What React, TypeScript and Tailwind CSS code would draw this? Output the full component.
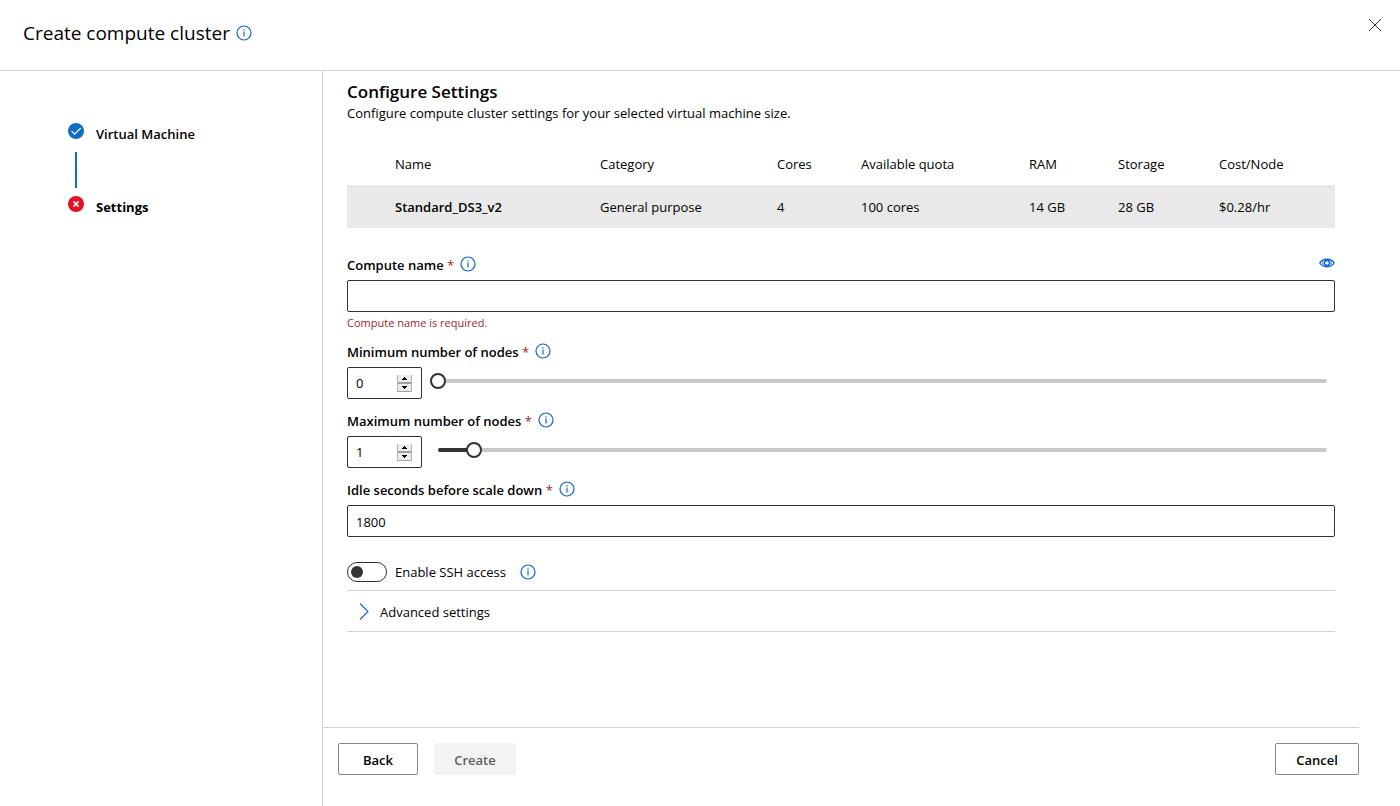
import { useState, type ReactNode } from "react";

const columns = [
  { label: "Name", value: "Standard_DS3_v2", width: "w-[205px]" },
  { label: "Category", value: "General purpose", width: "w-[177px]" },
  { label: "Cores", value: "4", width: "w-[84px]" },
  { label: "Available quota", value: "100 cores", width: "w-[168px]" },
  { label: "RAM", value: "14 GB", width: "w-[89px]" },
  { label: "Storage", value: "28 GB", width: "w-[101px]" },
  { label: "Cost/Node", value: "$0.28/hr", width: "" },
];

const MAX_NODES = 25;

function InfoIcon() {
  return (
    <svg viewBox="0 0 16 16" className="size-4 shrink-0" fill="none" aria-hidden="true">
      <circle cx="8" cy="8" r="7" stroke="#0f62d9" strokeWidth="1.2" />
      <path d="M8 6.5V11.5" stroke="#0f62d9" strokeWidth="1.2" />
      <path d="M7.4 4.2h1.2v1.3H7.4z" fill="#0f62d9" />
    </svg>
  );
}

function InfoButton({ label }: { label: string }) {
  return (
    <button type="button" aria-label={label} className="flex size-4 items-center justify-center">
      <InfoIcon />
    </button>
  );
}

function FieldLabel({ htmlFor, children }: { htmlFor: string; children: string }) {
  return (
    <div className="flex h-5 items-center gap-1.5">
      <label htmlFor={htmlFor} className="pt-0.5 font-semibold">
        {children} <span className="font-normal text-[#a4262c]">*</span>
      </label>
      <InfoButton label={`About ${children}`} />
    </div>
  );
}

function Step({ icon, children }: { icon: ReactNode; children: ReactNode }) {
  return (
    <li className="flex items-start gap-3">
      {icon}
      {children}
    </li>
  );
}

function NodeField({
  id,
  label,
  value,
  onChange,
}: {
  id: string;
  label: string;
  value: number;
  onChange: (value: number) => void;
}) {
  const set = (next: number) => onChange(Math.min(MAX_NODES, Math.max(0, next)));
  return (
    <div>
      <FieldLabel htmlFor={id}>{label}</FieldLabel>
      <div className="mt-1.5 flex gap-2">
        <div className="flex h-8 w-[75px] shrink-0 items-center rounded-xs border border-[#323130] pr-[9px]">
          <input
            id={id}
            type="number"
            min={0}
            max={MAX_NODES}
            value={value}
            onChange={(e) => set(Number(e.target.value))}
            className="w-full min-w-0 appearance-none bg-transparent pl-2 outline-none [&::-webkit-inner-spin-button]:appearance-none"
          />
          <div className="flex h-[17px] w-[15px] shrink-0 flex-col border-x border-[#b4b4b4] bg-[#ececec]">
            <button
              type="button"
              aria-label={`Increase ${label}`}
              onClick={() => set(value + 1)}
              className="flex h-2 items-center justify-center border-b border-[#a0a0a0]"
            >
              <svg viewBox="0 0 5 3" className="h-[3px] w-[5px]" shapeRendering="crispEdges">
                <path d="M2 0h1v1h1v1h1v1H0V2h1V1h1z" />
              </svg>
            </button>
            <button
              type="button"
              aria-label={`Decrease ${label}`}
              onClick={() => set(value - 1)}
              className="flex h-[9px] items-center justify-center border-y border-[#a0a0a0]"
            >
              <svg viewBox="0 0 5 3" className="h-[3px] w-[5px]" shapeRendering="crispEdges">
                <path d="M0 0h5v1H4v1H3v1H2V2H1V1H0z" />
              </svg>
            </button>
          </div>
        </div>
        <div className="grid h-7 flex-1 items-center">
          <div className="mx-2 h-1 rounded-full bg-[#c8c8c8] [grid-area:1/1]">
            <div
              className="h-1 rounded-full bg-[#333333]"
              style={{ width: `${(value / MAX_NODES) * 100}%` }}
            />
          </div>
          <input
            type="range"
            aria-label={label}
            min={0}
            max={MAX_NODES}
            value={value}
            onChange={(e) => set(Number(e.target.value))}
            className="h-4 w-full appearance-none bg-transparent [grid-area:1/1] [&::-webkit-slider-thumb]:size-4 [&::-webkit-slider-thumb]:appearance-none [&::-webkit-slider-thumb]:rounded-full [&::-webkit-slider-thumb]:border-2 [&::-webkit-slider-thumb]:border-solid [&::-webkit-slider-thumb]:border-[#333333] [&::-webkit-slider-thumb]:bg-white"
          />
        </div>
      </div>
    </div>
  );
}

export default function App() {
  const [name, setName] = useState("");
  const [minNodes, setMinNodes] = useState(0);
  const [maxNodes, setMaxNodes] = useState(1);
  const [idle, setIdle] = useState("1800");
  const [ssh, setSsh] = useState(false);

  return (
    <div className="flex min-h-screen flex-col bg-white font-['Open_Sans','Noto_Sans',sans-serif] text-[13px] leading-5 text-black">
      <header className="flex items-start justify-between border-b border-[#d2d2d2] pr-[17px] pl-[23px]">
        <div className="flex h-[70px] items-center gap-1.5 pb-1">
          <h1 className="text-[19px] leading-7">Create compute cluster</h1>
          <InfoButton label="About compute clusters" />
        </div>
        <button type="button" aria-label="Close" className="mt-[17px] flex size-4 items-center justify-center">
          <svg viewBox="0 0 16 16" className="size-4" fill="none" stroke="#333" strokeWidth="1">
            <path d="M2 2l12 12M14 2L2 14" />
          </svg>
        </button>
      </header>

      <div className="flex flex-1">
        <nav aria-label="Steps" className="w-[323px] shrink-0 border-r border-[#d2d2d2] pt-[52px] pl-[68px]">
          <ol>
            <Step
              icon={
                <svg viewBox="0 0 16 16" className="size-4" fill="none">
                  <circle cx="8" cy="8" r="8" fill="#106ebe" />
                  <path d="M3.6 8.2l3 3 6.2-6.2" stroke="#fff" strokeWidth="1.1" />
                </svg>
              }
            >
              <a href="#machine" className="pt-px font-semibold">Virtual Machine</a>
            </Step>
            <li aria-hidden="true" className="my-2 ml-[7px] h-9 w-0.5 bg-[#106ebe]" />
            <Step
              icon={
                <svg viewBox="0 0 16 16" className="size-4" fill="none">
                  <circle cx="8" cy="8" r="8" fill="#e81123" />
                  <path d="M5.4 5.4l5.2 5.2M10.6 5.4l-5.2 5.2" stroke="#fff" strokeWidth="1.5" />
                </svg>
              }
            >
              <a href="#settings" aria-current="step" className="pt-px font-bold">Settings</a>
            </Step>
          </ol>
        </nav>

        <main className="flex min-w-0 flex-1 flex-col">
          <div className="flex-1 pr-[65px] pl-6">
            <h2 className="pt-2.5 text-[17px] leading-[22px] font-semibold">Configure Settings</h2>
            <p>Configure compute cluster settings for your selected virtual machine size.</p>

            <table className="mt-5 w-full table-fixed text-left">
              <thead>
                <tr className="h-[42px]">
                  <td className="w-12" />
                  {columns.map((c) => (
                    <th key={c.label} scope="col" className={`font-normal ${c.width}`}>
                      {c.label}
                    </th>
                  ))}
                </tr>
              </thead>
              <tbody>
                <tr className="h-[43px] bg-[#e9e9e9]">
                  <td />
                  {columns.map((c, i) => (
                    <td key={c.label} className={i === 0 ? "font-semibold" : ""}>
                      {c.value}
                    </td>
                  ))}
                </tr>
              </tbody>
            </table>

            <form className="mt-[26px]">
              <div className="flex items-start justify-between">
                <FieldLabel htmlFor="name">Compute name</FieldLabel>
                <button type="button" aria-label="Preview name" className="flex h-[18px] items-center">
                  <svg viewBox="0 0 16 10" className="h-2.5 w-4" fill="none" stroke="#0f62d9">
                    <path d="M.8 5C4 0 12 0 15.2 5C12 10 4 10 .8 5z" strokeWidth="1.3" />
                    <circle cx="8" cy="5" r="2.6" strokeWidth="1.6" />
                    <path d="M4 3.2Q3 5 4 6.8M12 3.2Q13 5 12 6.8" strokeWidth=".7" />
                  </svg>
                </button>
              </div>
              <input
                id="name"
                value={name}
                onChange={(e) => setName(e.target.value)}
                className="mt-1.5 block h-8 w-full rounded-xs border border-[#323130] px-2 outline-none"
              />
              <p className="mt-px mb-2 text-[11px] leading-5 text-[#a4262c]">Compute name is required.</p>

              <NodeField id="min-nodes" label="Minimum number of nodes" value={minNodes} onChange={setMinNodes} />
              <div className="mt-[11px]">
                <NodeField id="max-nodes" label="Maximum number of nodes" value={maxNodes} onChange={setMaxNodes} />
              </div>

              <div className="mt-[11px]">
                <FieldLabel htmlFor="idle">Idle seconds before scale down</FieldLabel>
                <input
                  id="idle"
                  value={idle}
                  onChange={(e) => setIdle(e.target.value)}
                  className="mt-1.5 block h-8 w-full rounded-xs border border-[#323130] px-2 pt-0.5 outline-none"
                />
              </div>

              <div className="mt-[25px] flex items-center">
                <button
                  id="ssh"
                  type="button"
                  role="switch"
                  aria-checked={ssh}
                  onClick={() => setSsh(!ssh)}
                  className={`flex h-5 w-10 items-center rounded-full border border-[#323130] px-[3px] ${ssh ? "justify-end" : ""}`}
                >
                  <span className="size-3 rounded-full bg-[#333333]" />
                </button>
                <label htmlFor="ssh" className="mr-3.5 ml-2">Enable SSH access</label>
                <InfoButton label="About SSH access" />
              </div>
            </form>

            <button
              type="button"
              aria-expanded="false"
              className="mt-2 flex h-[42px] w-full items-center gap-2 border-y border-[#d2d2d2] pl-2"
            >
              <svg viewBox="0 0 17 17" className="size-[17px]" fill="none" stroke="#0f62d9" strokeWidth="1.1">
                <path d="M5 .5l8 8l-8 8" />
              </svg>
              <span className="pt-0.5">Advanced settings</span>
            </button>
          </div>

          <footer className="mr-[41px] flex gap-4 border-t border-[#d2d2d2] pt-[15px] pb-[31px] pl-[15px] font-semibold">
            <button type="button" className="h-8 w-20 rounded-xs border border-[#8a8886] pt-0.5">Back</button>
            <button type="button" disabled className="h-8 w-[82px] rounded-xs bg-[#f3f3f3] pt-0.5 text-[#605e5c]">
              Create
            </button>
            <button type="button" className="ml-auto h-8 w-[84px] rounded-xs border border-[#8a8886] pt-0.5">
              Cancel
            </button>
          </footer>
        </main>
      </div>
    </div>
  );
}
